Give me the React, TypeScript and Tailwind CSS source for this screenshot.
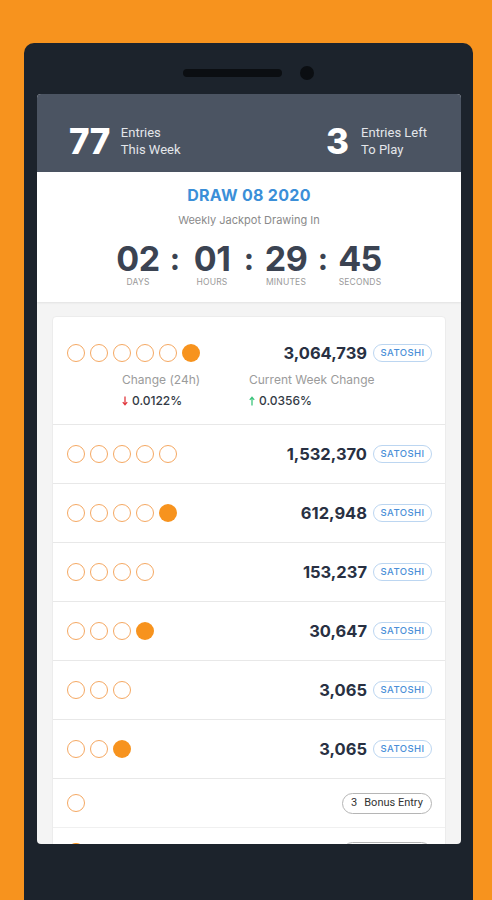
import React from "react";

const Circles = ({ empty, filled }: { empty: number; filled: boolean }) => (
  <div className="flex items-center gap-[5px]">
    {Array.from({ length: empty }).map((_, i) => (
      <div key={i} className="w-[18px] h-[18px] rounded-full border-[1.5px] border-[#f5a862]" />
    ))}
    {filled && <div className="w-[18px] h-[18px] rounded-full bg-[#f7931e]" />}
  </div>
);

const Amount = ({ value }: { value: string }) => (
  <div className="flex items-center">
    <span className="text-[16.5px] font-bold text-[#283042] leading-[22px]" style={{ fontFamily: "Inter, sans-serif" }}>
      {value}
    </span>
    <span
      className="ml-[6px] h-[18px] w-[59px] flex items-center justify-center rounded-full border border-[#bcd6f1] text-[9.5px] font-medium text-[#4b8fd8] tracking-[0.4px]"
      style={{ fontFamily: "Inter, sans-serif" }}
    >
      SATOSHI
    </span>
  </div>
);

const rows = [
  { empty: 5, filled: false, value: "1,532,370" },
  { empty: 4, filled: true, value: "612,948" },
  { empty: 4, filled: false, value: "153,237" },
  { empty: 3, filled: true, value: "30,647" },
  { empty: 3, filled: false, value: "3,065" },
  { empty: 2, filled: true, value: "3,065" },
];

const Unit = ({ n, label }: { n: string; label: string }) => (
  <div className="w-[44px] flex flex-col items-center">
    <div className="text-[34px] leading-[34px] font-bold text-[#3b4352] tracking-[-0.5px]">{n}</div>
    <div className="text-[8.5px] leading-[12px] text-[#9a9a9a] tracking-[0.2px]">{label}</div>
  </div>
);

const Colon = () => (
  <div className="w-[30px] flex justify-center">
    <div className="text-[31px] leading-[34px] font-bold text-[#3b4352]">:</div>
  </div>
);

const Arrow = ({ up }: { up: boolean }) => (
  <svg width="6" height="10" viewBox="0 0 6 10" className="mr-[4px]">
    {up ? (
      <path d="M3 9.5V1.5M0.8 3.8L3 1.2L5.2 3.8" stroke="#3cc47c" strokeWidth="1.3" fill="none" />
    ) : (
      <path d="M3 0.5V8.5M0.8 6.2L3 8.8L5.2 6.2" stroke="#e0393e" strokeWidth="1.3" fill="none" />
    )}
  </svg>
);

export default function App() {
  return (
    <div className="w-[492px] h-[900px] overflow-hidden bg-[#f7931e] pt-[43px] pl-[24px]" style={{ fontFamily: "Inter, sans-serif" }}>
      <div className="w-[449px] h-[900px] rounded-[10px] bg-[#1c232c] pt-[22px]">
        <div className="h-[16px] flex items-center justify-center gap-[18px]">
          <div className="w-[99px] h-[8px] rounded-full bg-[#0b0e12]" />
          <div className="w-[14px] h-[14px] rounded-full bg-[#0b0e12]" />
        </div>
        <div className="mt-[13px] ml-[13px] w-[424px] h-[750px] rounded-[4px] overflow-hidden bg-[#f4f4f4]">
          {/* header */}
          <div className="h-[78px] bg-[#4b5462] flex items-center justify-between pl-[32px] pr-[34px] pt-[16px]">
            <div className="flex items-center">
              <div className="text-[35px] font-extrabold text-white leading-[36px] tracking-[-0.5px]">77</div>
              <div className="ml-[11px] text-[13px] leading-[17px] text-[#e3e6ea]" style={{ fontFamily: "Roboto, sans-serif" }}>
                <div>Entries</div>
                <div>This Week</div>
              </div>
            </div>
            <div className="flex items-center">
              <div className="text-[35px] font-extrabold text-white leading-[36px]">3</div>
              <div className="ml-[12px] text-[13px] leading-[17px] text-[#e3e6ea]" style={{ fontFamily: "Roboto, sans-serif" }}>
                <div>Entries Left</div>
                <div>To Play</div>
              </div>
            </div>
          </div>
          {/* draw */}
          <div className="h-[130px] bg-white flex flex-col items-center pt-[12px] shadow-[0_1px_2px_rgba(0,0,0,0.08)]">
            <div className="text-[16px] leading-[22px] font-bold text-[#3b8fd8] tracking-[0.3px]">DRAW 08 2020</div>
            <div className="mt-[6px] text-[11px] leading-[16px] text-[#8a8a8a]">Weekly Jackpot Drawing In</div>
            <div className="mt-[14px] flex">
              <Unit n="02" label="DAYS" />
              <Colon />
              <Unit n="01" label="HOURS" />
              <Colon />
              <Unit n="29" label="MINUTES" />
              <Colon />
              <Unit n="45" label="SECONDS" />
            </div>
          </div>
          {/* list */}
          <div className="px-[15px] pt-[14px]">
            <div className="rounded-[4px] border border-[#ececec] bg-white">
              <div className="h-[107px] pl-[14px] pr-[13px] pt-[27px]">
                <div className="h-[18px] flex items-center justify-between">
                  <Circles empty={5} filled={true} />
                  <Amount value="3,064,739" />
                </div>
                <div className="flex pl-[55px] mt-[10px]">
                  <div className="w-[127px]">
                    <div className="text-[12px] leading-[16px] text-[#9b9b9b]">Change (24h)</div>
                    <div className="mt-[5px] flex items-center text-[12px] leading-[16px] text-[#333a45] font-medium">
                      <Arrow up={false} />
                      0.0122%
                    </div>
                  </div>
                  <div>
                    <div className="text-[12px] leading-[16px] text-[#9b9b9b]">Current Week Change</div>
                    <div className="mt-[5px] flex items-center text-[12px] leading-[16px] text-[#333a45] font-medium">
                      <Arrow up={true} />
                      0.0356%
                    </div>
                  </div>
                </div>
              </div>
              {rows.map((r, i) => (
                <div key={i} className="h-[59px] border-t border-[#e8e8e8] pl-[14px] pr-[13px] flex items-center justify-between">
                  <Circles empty={r.empty} filled={r.filled} />
                  <Amount value={r.value} />
                </div>
              ))}
              <div className="h-[49px] border-t border-[#e8e8e8] pl-[14px] pr-[13px] flex items-center justify-between">
                <Circles empty={1} filled={false} />
                <div
                  className="h-[21px] w-[90px] rounded-full border border-[#b5b5b5] flex items-center justify-center text-[11px] text-[#333]"
                  style={{ fontFamily: "Roboto, sans-serif" }}
                >
                  <span>3</span>
                  <span className="ml-[7px]">Bonus Entry</span>
                </div>
              </div>
              <div className="h-[49px] border-t border-[#f0f0f0] pl-[14px] pr-[13px] flex items-center justify-between">
                <Circles empty={0} filled={true} />
                <div className="h-[21px] w-[90px] rounded-full border border-[#b5b5b5]" />
              </div>
            </div>
          </div>
        </div>
      </div>
    </div>
  );
}
